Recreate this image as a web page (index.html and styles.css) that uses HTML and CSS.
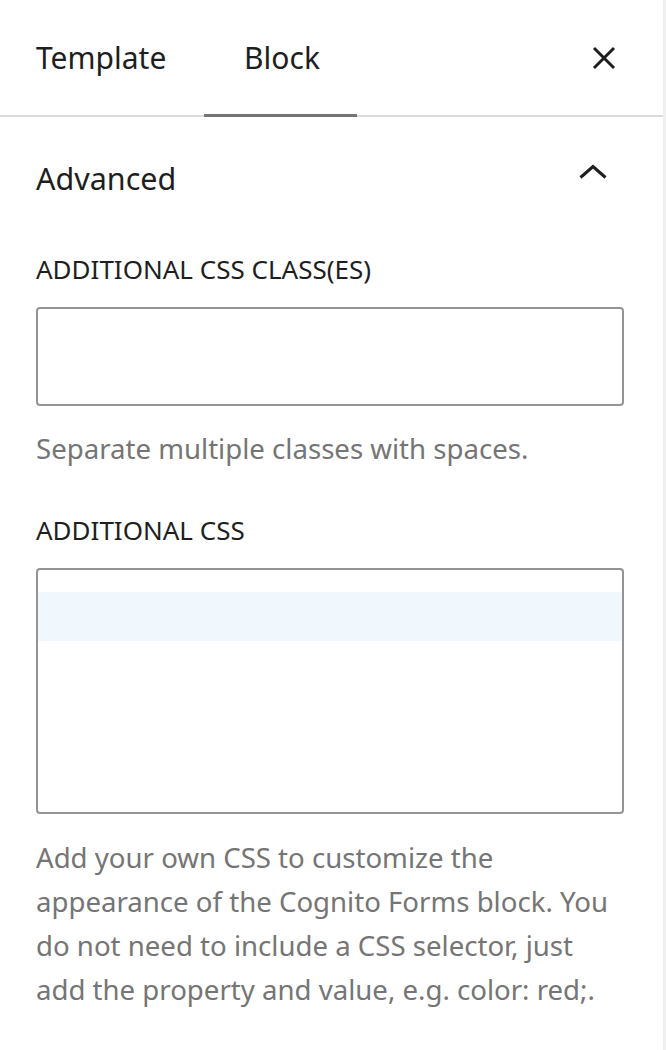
FILE: index.html
```html
<!DOCTYPE html>
<html lang="en">
<head>
    <meta charset="UTF-8">
    <meta name="viewport" content="width=device-width, initial-scale=1.0">
    <title>Block settings</title>
    <link rel="stylesheet" href="styles.css">
</head>
<body>
    <div class="sidebar">
        <div class="tabs">
            <div class="tab tab-template">Template</div>
            <div class="tab tab-block active">Block</div>
            <button class="btn-close" aria-label="Close settings">
                <svg width="24" height="24" viewBox="0 0 24 24">
                    <path d="M2 2 L22 22 M22 2 L2 22" stroke="#1e1e1e" stroke-width="3" fill="none"/>
                </svg>
            </button>
        </div>

        <div class="panel">
            <div class="panel-title">
                <span>Advanced</span>
                <svg class="chevron" width="28" height="15" viewBox="0 0 28 15">
                    <path d="M1.5 13.5 L14 2.5 L26.5 13.5" stroke="#1e1e1e" stroke-width="3" fill="none"/>
                </svg>
            </div>

            <label class="field-label" for="classes">ADDITIONAL CSS CLASS(ES)</label>
            <input class="field-input" type="text" id="classes">
            <p class="help">Separate multiple classes with spaces.</p>

            <label class="field-label label-css">ADDITIONAL CSS</label>
            <div class="code-editor">
                <div class="active-line"></div>
            </div>
            <p class="help help-css">Add your own CSS to customize the appearance of the Cognito Forms block. You do not need to include a CSS selector, just add the property and value, e.g. color: red;.</p>
        </div>
    </div>
</body>
</html>
```

FILE: styles.css
```css
body {
    font-family: "Noto Sans", "Open Sans", sans-serif;
    background-color: #fff;
    color: #1e1e1e;
    margin: 0;
    padding: 0;
}

.sidebar {
    width: 663px;
    min-height: 1050px;
    border-right: 3px solid #f0f0f0;
    background-color: #fff;
}

/* cabecalho com as abas */
.tabs {
    display: flex;
    align-items: stretch;
    height: 115px;
    border-bottom: 2px solid #dcdcdc;
}

.tab {
    display: flex;
    align-items: center;
    font-size: 30px;
    box-sizing: border-box;
    border-bottom: 3px solid transparent;
    margin-bottom: -2px;
}

.tab-template {
    width: 204px;
    padding-left: 36px;
}

.tab-block {
    width: 153px;
    justify-content: center;
    padding-left: 3px;
}

.tab.active {
    border-bottom-color: #757575;
}

.btn-close {
    margin-left: auto;
    margin-right: 47px;
    align-self: center;
    background: none;
    border: none;
    padding: 0;
    width: 24px;
    height: 24px;
    cursor: pointer;
}

.btn-close svg {
    display: block;
}

.panel {
    padding: 0 39px 0 36px;
}

.panel-title {
    display: flex;
    justify-content: space-between;
    align-items: center;
    height: 122px;
    font-size: 30.5px;
}

.chevron {
    margin-right: 17px;
    margin-top: -13px;
}

.field-label {
    display: block;
    font-size: 26px;
    line-height: 32px;
    margin-top: 14px;
    margin-bottom: 22px;
}

.field-input {
    display: block;
    width: 100%;
    height: 99px;
    box-sizing: border-box;
    border: 2px solid #949494;
    border-radius: 4px;
    margin: 0;
}

.help {
    margin: 20px 0 0;
    font-size: 27.6px;
    line-height: 44px;
    color: #757575;
}

.label-css {
    margin-top: 44px;
}

.code-editor {
    height: 246px;
    box-sizing: border-box;
    border: 2px solid #949494;
    border-radius: 4px;
    padding-top: 22px;
}

.active-line {
    height: 49px;
    background-color: #f0f8fe;
}

.help-css {
    margin-top: 21px;
}
```
